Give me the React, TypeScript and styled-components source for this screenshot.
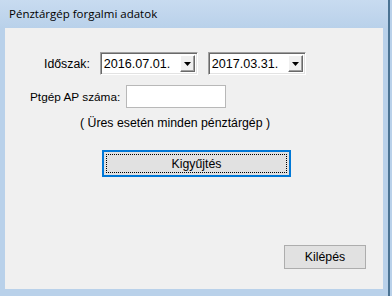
import React from 'react';
import styled, { createGlobalStyle } from 'styled-components';

const colors = {
    frame: '#b9d1ea',
    frameTop: '#c8dbf0',
    frameDark: '#4b7393',
    client: '#f0f0f0',
    text: '#000000',
    buttonFace: '#e1e1e1',
    buttonBorder: '#adadad',
    focusBlue: '#0078d7',
    inputBorder: '#b8b8b8',
};

const GlobalStyle = createGlobalStyle`
    html,
    body {
        margin: 0;
        padding: 0;
        width: 392px;
        height: 296px;
        overflow: hidden;
        background: ${colors.frame};
    }
`;

const DropArrow = () => (
    <svg width="7" height="4" viewBox="0 0 7 4">
        <polygon points="0,0 7,0 3.5,4" fill="#000" />
    </svg>
);

interface DatePickerProps {
    value: string;
}

const DatePicker = ({ value }: DatePickerProps) => (
    <PickerBox>
        <PickerValue>{value}</PickerValue>
        <PickerButton>
            <DropArrow />
        </PickerButton>
    </PickerBox>
);

const App = () => (
    <>
        <GlobalStyle />
        <Outer>
            <Window>
                <TitleBar>Pénztárgép forgalmi adatok</TitleBar>
                <Client>
                    <Row $indent={39} $top={24} $gap={10}>
                        <Label>Időszak:</Label>
                        <DatePicker value="2016.07.01." />
                        <DatePicker value="2017.03.31." />
                    </Row>
                    <Row $indent={25} $top={10} $gap={6}>
                        <Label $size={11.8}>Ptgép AP száma:</Label>
                        <TextInput />
                    </Row>
                    <Hint>( Üres esetén minden pénztárgép )</Hint>
                    <CollectButton>
                        <FocusRect>Kigyűjtés</FocusRect>
                    </CollectButton>
                    <Footer>
                        <ExitButton>Kilépés</ExitButton>
                    </Footer>
                </Client>
            </Window>
        </Outer>
    </>
);

const Outer = styled.div`
    width: 392px;
    height: 296px;
    padding-right: 2px;
    box-sizing: border-box;
    background: ${colors.frame};
`;

const Window = styled.div`
    display: flex;
    flex-direction: column;
    height: 100%;
    border-right: 2px solid ${colors.frameDark};
    box-sizing: border-box;
    padding: 0 5px 7px 5px;
    background: linear-gradient(${colors.frameTop} 0px, ${colors.frame} 28px);
`;

const TitleBar = styled.div`
    height: 28px;
    line-height: 28px;
    padding-left: 4px;
    font-family: 'Open Sans', 'Noto Sans', sans-serif;
    font-size: 11.5px;
    color: ${colors.text};
    white-space: nowrap;
`;

const Client = styled.div`
    flex: 1;
    display: flex;
    flex-direction: column;
    align-items: flex-start;
    background: ${colors.client};
    font-family: 'Liberation Sans', Arial, sans-serif;
    font-size: 12.3px;
    color: ${colors.text};
`;

const Row = styled.div<{ $indent: number; $top: number; $gap: number }>`
    display: flex;
    align-items: center;
    gap: ${({ $gap }) => $gap}px;
    margin-left: ${({ $indent }) => $indent}px;
    margin-top: ${({ $top }) => $top}px;
`;

const Label = styled.span<{ $size?: number }>`
    white-space: nowrap;
    font-size: ${({ $size }) => ($size ? `${$size}px` : 'inherit')};
`;

const PickerBox = styled.div`
    display: flex;
    align-items: center;
    width: 98px;
    height: 23px;
    box-sizing: border-box;
    background: #fff;
    border-top: 1px solid #a0a0a0;
    border-left: 1px solid #a0a0a0;
    border-right: 1px solid #ffffff;
    border-bottom: 1px solid #ffffff;
    box-shadow: inset 1px 1px 0 #696969, inset -1px -1px 0 #e3e3e3;
    padding: 2px 2px 2px 3px;
`;

const PickerValue = styled.span`
    flex: 1;
    font-size: 12.6px;
    white-space: nowrap;
`;

const PickerButton = styled.div`
    display: flex;
    align-items: center;
    justify-content: center;
    width: 15px;
    height: 17px;
    box-sizing: border-box;
    background: ${colors.client};
    border-top: 1px solid #ffffff;
    border-left: 1px solid #ffffff;
    border-right: 1px solid #696969;
    border-bottom: 1px solid #696969;
    box-shadow: inset -1px -1px 0 #a0a0a0;
`;

const TextInput = styled.div`
    width: 100px;
    height: 23px;
    box-sizing: border-box;
    background: #fff;
    border: 1px solid ${colors.inputBorder};
`;

const Hint = styled.div`
    margin-top: 7px;
    margin-left: 75px;
    line-height: 16px;
    white-space: nowrap;
`;

const CollectButton = styled.div`
    margin-top: 19px;
    margin-left: 97px;
    width: 189px;
    height: 27px;
    box-sizing: border-box;
    padding: 2px;
    background: ${colors.buttonFace};
    border: 2px solid ${colors.focusBlue};
`;

const FocusRect = styled.div`
    height: 100%;
    box-sizing: border-box;
    border: 1px dotted #000;
    display: flex;
    align-items: center;
    justify-content: center;
`;

const Footer = styled.div`
    margin-top: auto;
    align-self: stretch;
    display: flex;
    justify-content: flex-end;
    padding: 0 17px 20px 0;
`;

const ExitButton = styled.div`
    width: 82px;
    height: 24px;
    box-sizing: border-box;
    display: flex;
    align-items: center;
    justify-content: center;
    background: ${colors.buttonFace};
    border: 1px solid ${colors.buttonBorder};
`;

export default App;
